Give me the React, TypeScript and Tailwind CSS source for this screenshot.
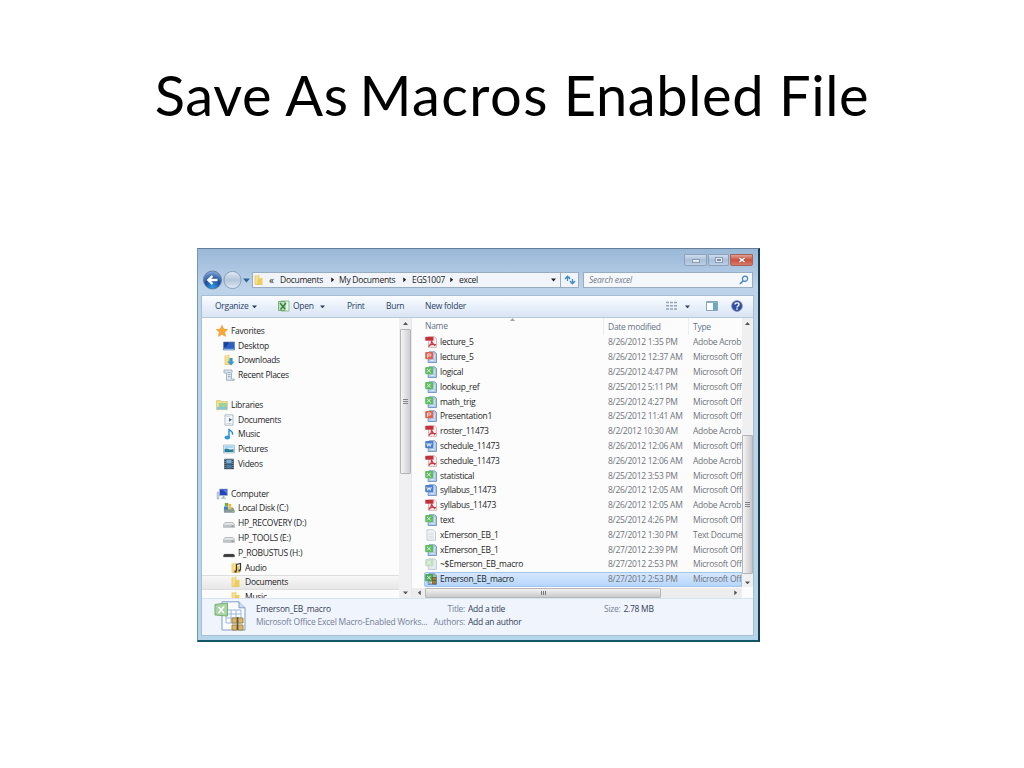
import React from 'react';

type IconKind =
  | 'star' | 'desktop' | 'downloads' | 'recent' | 'libraries' | 'document' | 'music' | 'pictures' | 'videos'
  | 'computer' | 'localdisk' | 'drive' | 'usb' | 'audio' | 'folder'
  | 'pdf' | 'ppt' | 'xls' | 'doc' | 'txt' | 'temp' | 'xlsm';

const officeColors: Record<string, [string, string, string]> = {
  ppt: ['#de6350', '#b3c9ea', '#fbd9cf'],
  xls: ['#5fbb5f', '#afcbe8', '#e2f7dc'],
  doc: ['#4b7fcb', '#b0c8ec', '#e3edfb'],
  temp: ['#c3dfc2', '#e2e8ec', '#f4faf2'],
  xlsm: ['#4ba557', '#a3b3ab', '#e2f7dc'],
};

function Icon({ kind }: { kind: IconKind }) {
  const office = officeColors[kind];
  return (
    <svg viewBox="0 0 12 12" className="h-3 w-3 shrink-0">
      {office && (
        <>
          <path d="M4 .8h5.500L11.500 2.500v9H3z" fill={office[1]} stroke={kind === 'temp' ? '#c3ccd2' : '#6f93c4'} strokeWidth=".9" />
          <path d="M5.500 9.500h4M9.300 3.500v4.500" stroke="#e6effa" strokeWidth=".7" />
          <rect x=".2" y="1" width="8" height="7.200" rx="1" fill={office[0]} />
          {kind === 'doc' && <path d="M1.800 3l1 3.300L4 3.500l1.200 2.800L6.300 3" fill="none" stroke={office[2]} />}
          {kind === 'ppt' && <path d="M2.500 6.800V3H5a1 1 0 0 1 0 2H2.500" fill="none" stroke={office[2]} />}
          {kind !== 'doc' && kind !== 'ppt' && <path d="M2 2.800l3.800 3.700M5.700 2.800L2 6.500" stroke={office[2]} />}
          {kind === 'xlsm' && <path d="M7.500 4.500h3.500v6.500H7.500zM9.200 4.500V11M7.500 7.500H11" fill="#c9953c" stroke="#54462c" strokeWidth=".6" />}
        </>
      )}
      {kind === 'pdf' && (
        <>
          <path d="M3.500.8h6L11.500 2.600v8.800H3.500z" fill="#faeeee" stroke="#cf9da0" strokeWidth=".7" />
          <path d="M.3.800h8.200v3.900H.3z" fill="#c4303a" />
          <path d="M3.600 10.500c2.400-1.700 3.200-4 2.800-6M4 9.200c2-.9 4-1.200 7-.5M6.700 5.500c.6 1.800 1.500 3 3.300 4.500" fill="none" stroke="#c93a44" strokeWidth="1.300" />
        </>
      )}
      {kind === 'txt' && (
        <>
          <path d="M2 .8h6.300L10.500 3v8.200H2z" fill="#f4f6f7" stroke="#b2b9bd" strokeWidth=".7" />
          <path d="M3.500 4h5M3.500 5.700h5M3.500 7.400h5M3.500 9.100h5" stroke="#cbd3d8" strokeWidth=".7" />
        </>
      )}
      {kind === 'star' && <path d="M6 .3l1.700 3.800 4 .4-3 2.700.9 4.200L6 9.300l-3.600 2.100.9-4.200-3-2.700 4-.4z" fill="#fbab35" stroke="#e08a25" strokeWidth=".5" />}
      {kind === 'desktop' && (
        <>
          <path d="M.5 2h11v8H.5z" fill="#2b61c4" stroke="#5c7391" strokeWidth=".6" />
          <path d="M1 2.500h5L3 7H1z" fill="#173f9c" /><path d="M1 9.300h10" stroke="#9fc7ef" />
        </>
      )}
      {(kind === 'folder' || kind === 'audio' || kind === 'downloads') && (
        <>
          <path d="M2 1.500l4-.8v9.800H2z" fill="#f7e08a" />
          <path d="M6 4.300l3.500-.6v7H3.200z" fill="#f0cf5e" />
          <path d="M6 .800v7M2 1.500v9h7.500" fill="none" stroke="#dfbd55" strokeWidth=".6" />
        </>
      )}
      {kind === 'audio' && <path d="M6.500 9V2.500l4-1v6.700" fill="none" stroke="#373737" strokeWidth="1.200" />}
      {kind === 'audio' && <path d="M4.500 8.500h2v2h-2zM8.500 7.500h2v2h-2z" fill="#373737" />}
      {kind === 'downloads' && <path d="M6.500 4h3v3.500h2L8 11.500 4.500 7.500h2z" fill="#2f9be0" />}
      {kind === 'recent' && (
        <>
          <path d="M1 1h8v2.500L8.500 4v6h2.700v1.300H3.500L3.500 4H1z" fill="#dbe5ec" stroke="#8ba0ae" strokeWidth=".7" />
          <path d="M4.500 3.500h3M5 5.500h2.500M5 7.500h2.500" stroke="#8ba9bb" strokeWidth=".8" />
        </>
      )}
      {kind === 'libraries' && (
        <>
          <path d="M.5 1.500h4l1 1h6v8.200H.5z" fill="#f1dd86" stroke="#c8b565" strokeWidth=".5" />
          <path d="M3 4h8v5H3z" fill="#9bd49c" /><path d="M1 8h10v2.500H1z" fill="#84c4dc" />
        </>
      )}
      {kind === 'document' && (
        <>
          <path d="M2 .8h8v10.400H2z" fill="#f7f9fc" stroke="#91a2b4" strokeWidth=".7" />
          <path d="M6 4l3 1.800-3 2z" fill="#356cab" /><path d="M3.500 2.500h3M3.500 9.500h5" stroke="#b4c3d2" strokeWidth=".7" />
        </>
      )}
      {kind === 'music' && (
        <>
          <path d="M6 9.500V.8c.5 2 4.500 2.500 3.500 5.800" fill="none" stroke="#268ad1" strokeWidth="1.400" />
          <ellipse cx="4.300" cy="9.500" rx="2.700" ry="1.900" fill="#2999df" />
        </>
      )}
      {kind === 'pictures' && (
        <>
          <path d="M.5 2h11v8H.5z" fill="#d8eef9" stroke="#8ea3b1" strokeWidth=".6" />
          <path d="M1.500 6c3-2 4 2 9 0v3h-9z" fill="#277e9b" /><path d="M1.500 3h9v2h-9z" fill="#a2d8f2" />
        </>
      )}
      {kind === 'videos' && (
        <>
          <path d="M1.200.8h9.600v10.400H1.200z" fill="#38444d" />
          <path d="M3.300 1.500h5.400v4H3.300z" fill="#6fb0dc" /><path d="M3.300 6.500h5.400v4H3.300z" fill="#477da9" />
          <path d="M2.200 1v10M9.800 1v10" stroke="#ccd5da" strokeWidth=".7" strokeDasharray="1 1" />
        </>
      )}
      {kind === 'computer' && (
        <>
          <path d="M1 4h2v7H1z" fill="#c9d4df" stroke="#8b9bac" strokeWidth=".4" />
          <path d="M3.500 1h8v6.500h-8z" fill="#2143bd" stroke="#a9b9cb" strokeWidth=".7" />
          <path d="M7 2h4v4z" fill="#4d78e3" /><path d="M6.500 7.500h2v2.200h-2zM5 9.700h5v1H5z" fill="#a9b5c2" />
        </>
      )}
      {kind === 'localdisk' && (
        <>
          <path d="M.8 6.500l1.500-1h7.800l1.500 3v2.300H1z" fill="#8a959b" />
          <path d="M1.800 1h3.400v3.300H1.800z" fill="#72ad43" /><path d="M5.400 2h2.900v2.700H5.400z" fill="#e7b73d" />
          <path d="M1 4.500h3.800v3H1z" fill="#3682cc" /><path d="M5 5h3.500v2.500H5z" fill="#e4c24b" />
          <path d="M8.800 9.500h1.700" stroke="#5be353" />
        </>
      )}
      {kind === 'drive' && (
        <>
          <path d="M2 5.500h8l1.700 2.200v2.600H.4V7.700z" fill="#e4e6e7" stroke="#989ca0" strokeWidth=".6" />
          <path d="M.8 7.800h10.600v2.300H.8z" fill="#bfc3c6" /><path d="M8.500 9.200h2" stroke="#626b6d" strokeWidth=".7" />
        </>
      )}
      {kind === 'usb' && <path d="M1.500 7h9l1.200 1.200v1.800H.3V8.200z" fill="#343638" stroke="#999" strokeWidth=".4" />}
    </svg>
  );
}

function Caret({ className = '' }: { className?: string }) {
  return (
    <svg viewBox="0 0 6 4" className={`h-[3.500px] w-[5px] shrink-0 ${className}`}>
      <path d="M0 .5h6L3 4z" fill="currentColor" />
    </svg>
  );
}

const navItems: { icon?: IconKind; label?: string; indent?: string; selected?: boolean }[] = [
  { icon: 'star', label: 'Favorites', indent: 'pl-[14px]' },
  { icon: 'desktop', label: 'Desktop', indent: 'pl-[21px]' },
  { icon: 'downloads', label: 'Downloads', indent: 'pl-[21px]' },
  { icon: 'recent', label: 'Recent Places', indent: 'pl-[21px]' },
  {},
  { icon: 'libraries', label: 'Libraries', indent: 'pl-[14px]' },
  { icon: 'document', label: 'Documents', indent: 'pl-[21px]' },
  { icon: 'music', label: 'Music', indent: 'pl-[21px]' },
  { icon: 'pictures', label: 'Pictures', indent: 'pl-[21px]' },
  { icon: 'videos', label: 'Videos', indent: 'pl-[21px]' },
  {},
  { icon: 'computer', label: 'Computer', indent: 'pl-[14px]' },
  { icon: 'localdisk', label: 'Local Disk (C:)', indent: 'pl-[21px]' },
  { icon: 'drive', label: 'HP_RECOVERY (D:)', indent: 'pl-[21px]' },
  { icon: 'drive', label: 'HP_TOOLS (E:)', indent: 'pl-[21px]' },
  { icon: 'usb', label: 'P_ROBUSTUS (H:)', indent: 'pl-[21px]' },
  { icon: 'audio', label: 'Audio', indent: 'pl-[28px]' },
  { icon: 'folder', label: 'Documents', indent: 'pl-[28px]', selected: true },
  { icon: 'folder', label: 'Music', indent: 'pl-[28px]' },
];

const files: { icon: IconKind; name: string; date: string; type: string }[] = [
  { icon: 'pdf', name: 'lecture_5', date: '8/26/2012 1:35 PM', type: 'Adobe Acrob' },
  { icon: 'ppt', name: 'lecture_5', date: '8/26/2012 12:37 AM', type: 'Microsoft Off' },
  { icon: 'xls', name: 'logical', date: '8/25/2012 4:47 PM', type: 'Microsoft Off' },
  { icon: 'xls', name: 'lookup_ref', date: '8/25/2012 5:11 PM', type: 'Microsoft Off' },
  { icon: 'xls', name: 'math_trig', date: '8/25/2012 4:27 PM', type: 'Microsoft Off' },
  { icon: 'ppt', name: 'Presentation1', date: '8/25/2012 11:41 AM', type: 'Microsoft Off' },
  { icon: 'pdf', name: 'roster_11473', date: '8/2/2012 10:30 AM', type: 'Adobe Acrob' },
  { icon: 'doc', name: 'schedule_11473', date: '8/26/2012 12:06 AM', type: 'Microsoft Off' },
  { icon: 'pdf', name: 'schedule_11473', date: '8/26/2012 12:06 AM', type: 'Adobe Acrob' },
  { icon: 'xls', name: 'statistical', date: '8/25/2012 3:53 PM', type: 'Microsoft Off' },
  { icon: 'doc', name: 'syllabus_11473', date: '8/26/2012 12:05 AM', type: 'Microsoft Off' },
  { icon: 'pdf', name: 'syllabus_11473', date: '8/26/2012 12:05 AM', type: 'Adobe Acrob' },
  { icon: 'xls', name: 'text', date: '8/25/2012 4:26 PM', type: 'Microsoft Off' },
  { icon: 'txt', name: 'xEmerson_EB_1', date: '8/27/2012 1:30 PM', type: 'Text Docume' },
  { icon: 'xls', name: 'xEmerson_EB_1', date: '8/27/2012 2:39 PM', type: 'Microsoft Off' },
  { icon: 'temp', name: '~$Emerson_EB_macro', date: '8/27/2012 2:53 PM', type: 'Microsoft Off' },
  { icon: 'xlsm', name: 'Emerson_EB_macro', date: '8/27/2012 2:53 PM', type: 'Microsoft Off' },
];

function WindowButtons() {
  return (
    <div className="flex h-[13px] gap-px pt-px">
      <div className="flex h-3 w-[23px] items-center justify-center rounded-b-[2px] border border-[#8ba0bb] bg-gradient-to-b from-[#cfdeee] via-[#a9bfd8] to-[#bcd0e6]">
        <div className="mt-[2px] h-[4px] w-[8px] border border-[#8999ae] bg-[#e3ebf4]" />
      </div>
      <div className="flex h-3 w-[21px] items-center justify-center rounded-b-[2px] border border-[#8ba0bb] bg-gradient-to-b from-[#cfdeee] via-[#a9bfd8] to-[#bcd0e6]">
        <div className="h-[6px] w-[8px] border border-[#8999ae] bg-[#e3ebf4] p-px"><div className="h-full border border-[#7b8ca3]" /></div>
      </div>
      <div className="flex h-3 w-[23px] items-center justify-center rounded-b-[2px] border border-[#a8605c] bg-gradient-to-b from-[#e2a093] via-[#c9503d] to-[#d77c66]">
        <svg viewBox="0 0 8 8" className="h-2 w-2"><path d="M1.500 2l5 4M6.500 2l-5 4" stroke="#855" strokeWidth="2.600" /><path d="M1.500 2l5 4M6.500 2l-5 4" stroke="#fff" strokeWidth="1.600" /></svg>
      </div>
    </div>
  );
}

function AddressRow() {
  return (
    <div className="flex h-[18px] items-center pl-[2px] text-[#1c1c1c]">
      <svg viewBox="0 0 49 20" className="h-5 w-[49px] shrink-0">
        <defs>
          <radialGradient id="back" cx=".5" cy=".9" r=".9"><stop stopColor="#2d9ee8" /><stop offset=".5" stopColor="#1c4e9d" /><stop offset="1" stopColor="#8aaddb" /></radialGradient>
          <linearGradient id="next" x2="0" y2="1"><stop stopColor="#e2ecf6" /><stop offset=".5" stopColor="#b3c5d9" /><stop offset="1" stopColor="#e0ebf5" /></linearGradient>
        </defs>
        <circle cx="9.500" cy="10" r="9" fill="url(#back)" stroke="#5b7191" strokeWidth=".8" />
        <path d="M14.500 10H5.500M9.500 6L5.300 10l4.200 4" fill="none" stroke="#fff" strokeWidth="2.400" />
        <circle cx="29.500" cy="10" r="8.600" fill="url(#next)" stroke="#8498b0" strokeWidth=".9" />
        <path d="M40 8.500h7L43.500 12.500z" fill="#28659d" />
      </svg>
      <div className="flex h-4 w-[327px] items-center border border-[#9aacc1] bg-[#f1f5fb]">
        <Icon kind="folder" />
        <span className="ml-[4px] w-[11px] text-[10px]">«</span>
        <span className="w-[50px]">Documents</span>
        <Caret className="-rotate-90" />
        <span className="ml-[4px] w-[63px]">My Documents</span>
        <Caret className="-rotate-90" />
        <span className="ml-[5px] w-[37px]">EGS1007</span>
        <Caret className="-rotate-90" />
        <span className="ml-[5px]">excel</span>
        <Caret className="mr-[4px] ml-auto" />
        <div className="flex h-full w-[18px] items-center justify-center border-l border-[#9aacc1]">
          <svg viewBox="0 0 12 12" className="h-3 w-3"><path d="M3.500 7V2.500M1 5L3.500 2.300 6 5M3.500 3.500h2.500M8.500 5v4.500M6 7l2.500 2.700L11 7M8.500 8.500H6" fill="none" stroke="#3c8acb" strokeWidth="1.300" /></svg>
        </div>
      </div>
      <div className="ml-[4px] flex h-4 w-[170px] items-center border border-[#9aacc1] bg-[#f4f7fc] pl-[5px] pr-[3px]">
        <span className="text-[#747d88] italic">Search excel</span>
        <svg viewBox="0 0 10 10" className="ml-auto h-[10px] w-[10px]"><circle cx="6" cy="3.800" r="2.600" fill="#e5f3ff" stroke="#4585c0" strokeWidth="1.200" /><path d="M4.200 5.700L.9 9" stroke="#4585c0" strokeWidth="1.600" /></svg>
      </div>
    </div>
  );
}

function Toolbar() {
  return (
    <div className="flex h-[21.500px] items-center border-b border-[#b9c9dc] bg-gradient-to-b from-[#fbfdff] via-[#e8f0fa] to-[#d9e5f3] text-[#2d3f64]">
      <span className="w-[50px] pl-[13px]">Organize</span>
      <Caret className="" />
      <svg viewBox="0 0 12 12" className="ml-[21px] h-3 w-3"><path d="M3 1h8v10H3z" fill="#e7f4e8" stroke="#78b37b" strokeWidth=".8" /><path d="M.5 1.500H7v9H.5z" fill="#bce0bd" stroke="#4f9955" strokeWidth=".7" /><path d="M2 3l5 6M8 3L2.500 9.500" stroke="#32843d" strokeWidth="1.400" /></svg>
      <span className="ml-[3px] w-[27px]">Open</span>
      <Caret />
      <span className="ml-[22px] w-[39px]">Print</span>
      <span className="w-[39px]">Burn</span>
      <span>New folder</span>
      <svg viewBox="0 0 12 10" className="ml-auto h-[10px] w-3"><path d="M0 1.500h3M0 4.800h3M0 8.100h3M4 1.500h3M4 4.800h3M4 8.100h3M8 1.500h3M8 4.800h3M8 8.100h3" stroke="#96a3b5" strokeWidth="1.500" /></svg>
      <Caret className="ml-[7px]" />
      <svg viewBox="0 0 12 12" className="ml-[16px] h-3 w-3"><path d="M.5 1.500h11v9H.5z" fill="#fff" stroke="#6f91a9" strokeWidth=".8" /><path d="M1 2h10v1H1z" fill="#86b5cc" /><path d="M7 3h4v7H7z" fill="#69a9bd" /></svg>
      <svg viewBox="0 0 12 12" className="mr-[10px] ml-[13px] h-3 w-3"><circle cx="6" cy="6" r="5.400" fill="#314d9f" stroke="#7c8eba" strokeWidth=".7" /><path d="M4 4.600C4 2.300 8 2.300 8 4.600 8 6 6 6 6 7.500M6 8.300v1.500" fill="none" stroke="#fff" strokeWidth="1.400" /></svg>
    </div>
  );
}

function NavigationPane() {
  return (
    <div className="flex h-[280.500px] w-[210px] border-r border-[#e3e9f0]">
      <div className="h-full w-[197px] overflow-hidden pt-[6px]">
        {navItems.map((item, i) => (
          <div key={i} className={`flex h-[14.800px] items-center gap-[3px] ${item.indent ?? ''} ${item.selected ? 'border-y border-[#dedede] bg-gradient-to-b from-[#f7f7f7] to-[#e7e7e7]' : ''}`}>
            {item.icon && <Icon kind={item.icon} />}
            <span>{item.label}</span>
          </div>
        ))}
      </div>
      <div className="flex h-full w-3 flex-col items-center bg-[#f0f0f1]">
        <Caret className="mt-[4px] rotate-180 text-[#555]" />
        <div className="mt-[4px] flex h-[145px] w-[11px] items-center justify-center rounded-[1px] border border-[#b5b5b8] bg-gradient-to-r from-[#f5f5f5] to-[#cdcdd0]">
          <div className="h-[5px] w-[5px] border-y border-[#85858a] py-px"><div className="h-px bg-[#85858a]" /></div>
        </div>
        <Caret className="mt-auto mb-[4px] text-[#555]" />
      </div>
    </div>
  );
}

function FilePane() {
  return (
    <div className="flex h-[280.500px] min-w-0 flex-1">
      <div className="w-[330px] shrink-0 overflow-hidden">
        <div className="relative flex h-[17.500px] items-center pl-[13px] text-[#647388]">
          <Caret className="absolute top-0 left-[98px] rotate-180 text-[#98a5b2]" />
          <span className="w-[178px] shrink-0">Name</span>
          <span className="h-full w-[85px] shrink-0 border-l border-[#e8edf3] pl-[4px] leading-[17px]">Date modified</span>
          <span className="h-full border-l border-[#e8edf3] pl-[4px] leading-[17px]">Type</span>
        </div>
        {files.map((file, i) => (
          <div key={i} className={`ml-[12px] flex h-[14.800px] items-center whitespace-nowrap ${i === 16 ? 'rounded-l-[2px] bg-gradient-to-b from-[#d8e9fd] to-[#b4d4fb] outline outline-1 -outline-offset-1 outline-[#a3c6ed]' : ''}`}>
            <div className="flex w-[184px] shrink-0 items-center gap-[3px] pl-px"><Icon kind={file.icon} /><span>{file.name}</span></div>
            <span className="w-[85px] shrink-0 text-[#707479]">{file.date}</span>
            <span className="text-[#707479]">{file.type}</span>
          </div>
        ))}
        <div className="mt-[1px] flex h-[10.400px] items-center bg-[#ededee] pl-[5px]">
          <Caret className="rotate-90 text-[#555]" />
          <div className="ml-[3px] flex h-[10px] w-[236px] items-center justify-center rounded-[1px] border border-[#b8b8ba] bg-gradient-to-b from-[#f2f2f2] to-[#cacacc]">
            <div className="h-[4px] w-[5px] border-x border-[#77777b] px-px"><div className="h-full w-px bg-[#77777b]" /></div>
          </div>
          <Caret className="mr-[4px] ml-auto -rotate-90 text-[#555]" />
        </div>
      </div>
      <div className="flex h-[269.500px] flex-1 flex-col items-center bg-[#f0f0f1]">
        <Caret className="mt-[4px] rotate-180 text-[#555]" />
        <div className="mt-[110px] flex h-[139px] w-[11px] items-center justify-center rounded-[1px] border border-[#b5b5b8] bg-gradient-to-r from-[#f5f5f5] to-[#c8c8cc]">
          <div className="h-[5px] w-[5px] border-y border-[#85858a] py-px"><div className="h-px bg-[#85858a]" /></div>
        </div>
        <Caret className="mt-auto mb-[3px] text-[#555]" />
      </div>
    </div>
  );
}

function DetailsPane() {
  return (
    <div className="flex h-[37px] border-t border-[#d9e2ee] bg-[#f0f4fc] text-[#34415b]">
      <svg viewBox="0 0 32 30" className="mt-[2px] ml-[12px] h-[30px] w-8 shrink-0">
        <path d="M8 .8h17l6 6V29H8z" fill="#fbfdff" stroke="#7e9dc6" />
        <path d="M25 .8v6h6" fill="#ccdcf4" stroke="#7e9dc6" />
        <path d="M12 9h15v13H12zM12 13h15M12 17h15M17 9v13M22 9v13" fill="none" stroke="#9bb7dc" />
        <path d="M1 3.500L13.500 2v13L1 14z" fill="#a9d5a4" stroke="#75af73" />
        <path d="M4.500 6l5.500 6M10 5.500L4.500 12" stroke="#fff" strokeWidth="1.600" />
        <path d="M18 17h5v5h-5zM24 17h5v5h-5zM18 24h5v5h-5zM24 24h5v5h-5z" fill="#dcb566" stroke="#a58748" />
        <path d="M23.500 16v13" stroke="#5d574b" strokeWidth="1.500" />
      </svg>
      <div className="ml-[10px] w-[176px] pt-[3px] leading-[13px] whitespace-nowrap">
        <div className="tracking-[-0.200px]">Emerson_EB_macro</div>
        <div className="tracking-[-0.220px] text-[#75819a]">Microsoft Office Excel Macro-Enabled Works...</div>
      </div>
      <div className="grid w-[172px] grid-cols-[33px_1fr] content-start gap-x-[3px] pt-[3px] leading-[13px]">
        <span className="text-right text-[#75819a]">Title:</span><span>Add a title</span>
        <span className="text-right text-[#75819a]">Authors:</span><span>Add an author</span>
      </div>
      <div className="pt-[3px] leading-[13px]"><span className="mr-[3px] text-[#75819a]">Size:</span>2.78 MB</div>
    </div>
  );
}

export default function App() {
  return (
    <main className="flex h-[768px] w-[1024px] flex-col overflow-hidden bg-white">
      <h1 className="mt-[59px] h-[72px] text-center font-['Lato'] text-[56px] leading-[72px] tracking-[0.600px] whitespace-nowrap text-black">
        Save As <span className="-ml-[4px] tracking-[1.400px]">Macros</span> Enabled File
      </h1>
      <section className="mt-[117px] ml-[197px] flex h-[394px] w-[563px] flex-col border border-t-[#647d98] border-r-2 border-r-[#183b4d] border-b-2 border-b-[#125767] border-l-[#7597b8] bg-gradient-to-b from-[#9bb8d8] via-[#bdd3ea] via-10% to-[#b4d5ea] pr-[4px] pl-[3px] font-['Open_Sans',sans-serif] text-[8.500px] leading-[12px] tracking-[-0.270px] text-[#252525]">
        <div className="flex h-[22px] justify-end pt-[4px] pr-px"><WindowButtons /></div>
        <AddressRow />
        <div className="mt-[6px] border border-[#a9bdd3] bg-[#fcfcfd]">
          <Toolbar />
          <div className="flex"><NavigationPane /><FilePane /></div>
          <DetailsPane />
        </div>
      </section>
    </main>
  );
}
